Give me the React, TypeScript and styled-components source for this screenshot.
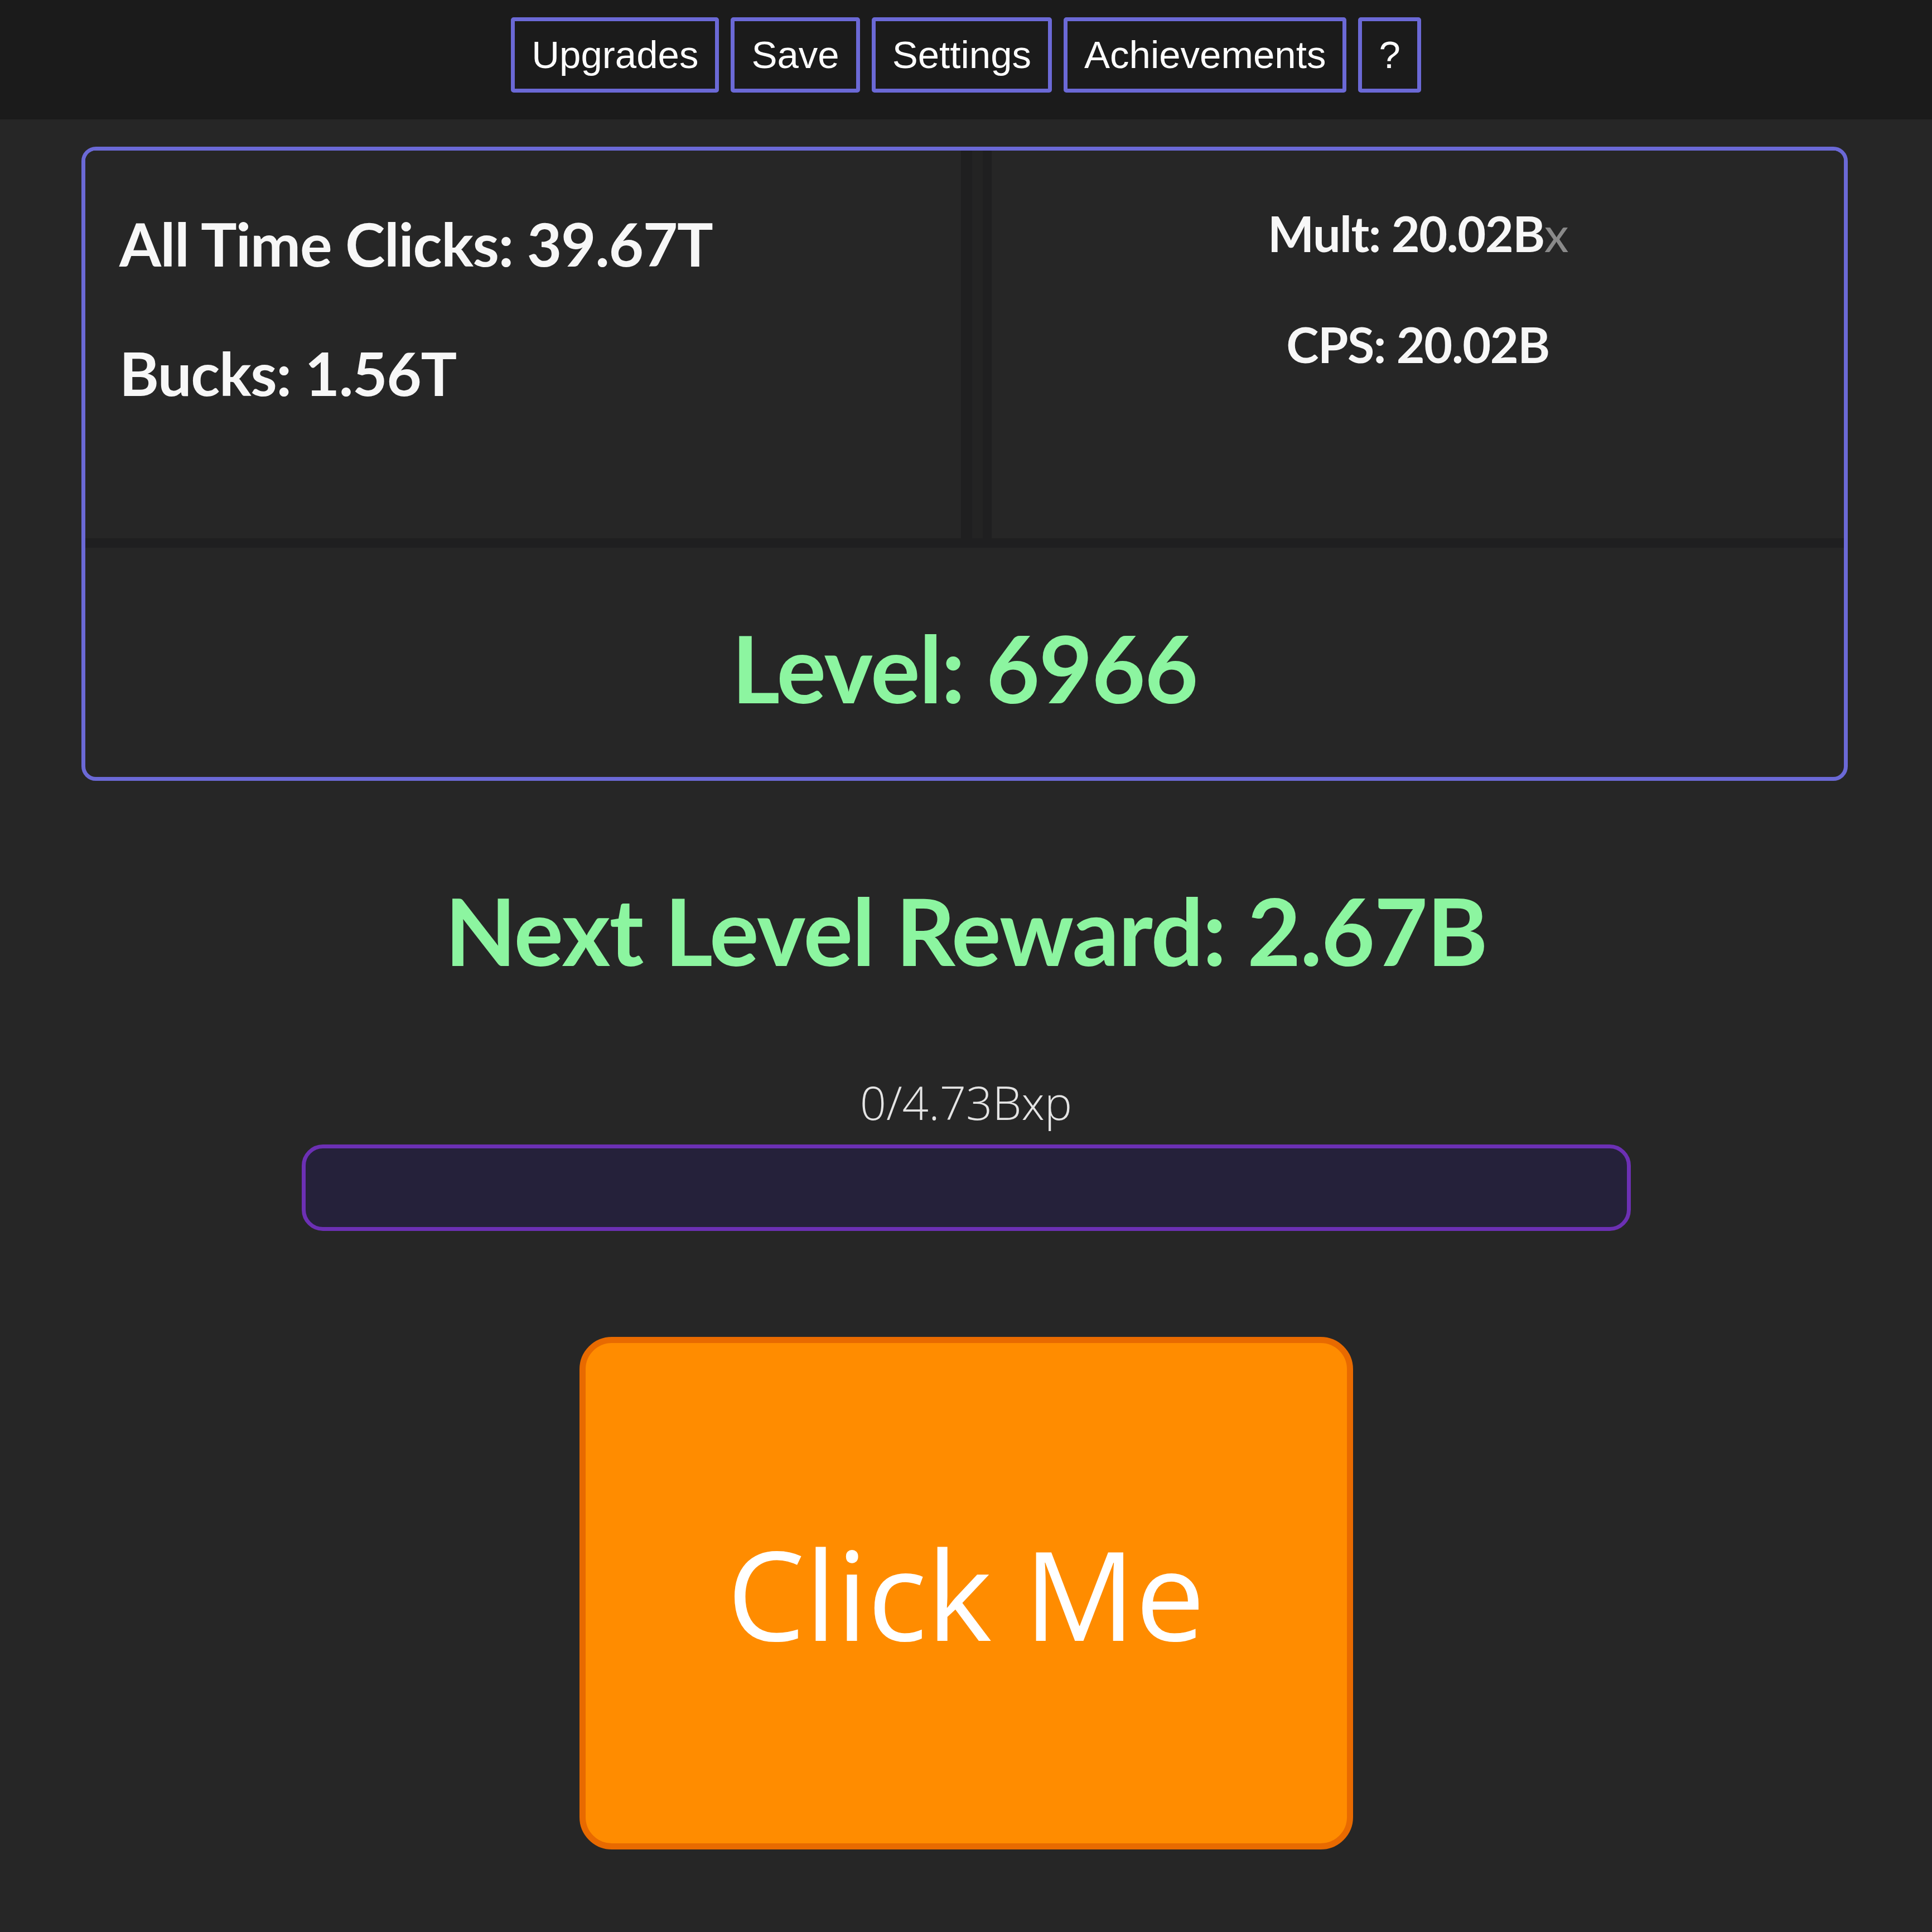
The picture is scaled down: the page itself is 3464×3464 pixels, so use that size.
import React from "react";
import styled, { createGlobalStyle } from "styled-components";

const GlobalStyle = createGlobalStyle`
  html, body {
    margin: 0;
    padding: 0;
    background: #262626;
  }
  body {
    font-family: "Lato", "Liberation Sans", sans-serif;
    color: #f7f7f7;
  }
`;

const Header = styled.header`
  height: 214px;
  box-sizing: border-box;
  padding-top: 31px;
  background: #1b1b1b;
  display: flex;
  justify-content: center;
  align-items: flex-start;
  gap: 21px;
`;

const NavButton = styled.button`
  height: 135px;
  box-sizing: border-box;
  padding: 0 30px;
  background: #1b1b1b;
  border: 7px solid #6b69d6;
  border-radius: 5px;
  color: #ffffff;
  font-family: "Liberation Sans", Arial, sans-serif;
  font-size: 69px;
  line-height: 1;
  cursor: pointer;
`;

const Card = styled.section`
  margin: 49px 151px 0 146px;
  border: 7px solid #6b69d6;
  border-radius: 26px;
  background: #262626;
  overflow: hidden;
`;

const TopRow = styled.div`
  display: grid;
  grid-template-columns: 1.03fr 1fr;
  column-gap: 19px;
  height: 712px;
  box-sizing: border-box;
  background: #232323;
  border-bottom: 17px solid #1f1f20;
`;

const StatCell = styled.div<{ $side: "left" | "right" }>`
  background: #262626;
  box-sizing: border-box;
  ${(p) =>
    p.$side === "left"
      ? `
    border-right: 20px solid #1f1f20;
    padding: 102px 0 0 61px;
    text-align: left;
  `
      : `
    border-left: 16px solid #1f1f20;
    padding: 96px 0 0 0;
    text-align: center;
  `}
`;

const BigStat = styled.p`
  margin: 0 0 102px 0;
  font-size: 108px;
  line-height: 1.2;
  font-weight: 700;
  letter-spacing: -1.4px;
`;

const SmallStat = styled.p`
  margin: 0 0 93px 0;
  font-size: 88px;
  line-height: 1.2;
  font-weight: 700;
  letter-spacing: -1.5px;
`;

const Suffix = styled.span`
  color: #8a8a8a;
  font-weight: 400;
`;

const LevelRow = styled.div`
  height: 411px;
  box-sizing: border-box;
  padding-top: 115px;
  text-align: center;
`;

const GreenTitle = styled.h2<{ $gap?: number }>`
  margin: ${(p) => p.$gap ?? 0}px 0 0 0;
  text-align: center;
  font-size: 166px;
  line-height: 1.2;
  font-weight: 700;
  letter-spacing: -1.5px;
  color: #8cf5a0;
`;

const XpLabel = styled.p`
  margin: 159px 0 0 0;
  text-align: center;
  font-family: "Open Sans", sans-serif;
  font-weight: 300;
  font-size: 83px;
  line-height: 1.2;
  color: #e4e4e4;
`;

const XpTrack = styled.div`
  width: 2383px;
  height: 155px;
  box-sizing: border-box;
  margin: 26px auto 0 auto;
  border: 7px solid #6c30b4;
  border-radius: 38px;
  background: #25213a;
  overflow: hidden;
`;

const XpFill = styled.div`
  height: 100%;
  background: #6c30b4;
`;

const ClickArea = styled.div`
  display: flex;
  justify-content: center;
  padding: 190px 0 150px 0;
`;

const ClickButton = styled.button`
  width: 1387px;
  height: 919px;
  box-sizing: border-box;
  background: #ff8c00;
  border: 11px solid #e86a00;
  border-radius: 58px;
  color: #ffffff;
  font-family: "Open Sans", sans-serif;
  font-size: 222px;
  font-weight: 400;
  cursor: pointer;
`;

const navItems = ["Upgrades", "Save", "Settings", "Achievements", "?"];

export default function App() {
  const xp = 0;
  const xpNeeded = 4.73e9;
  const pct = (xp / xpNeeded) * 100;

  return (
    <>
      <GlobalStyle />
      <Header>
        {navItems.map((n) => (
          <NavButton key={n}>{n}</NavButton>
        ))}
      </Header>

      <Card>
        <TopRow>
          <StatCell $side="left">
            <BigStat>All Time Clicks: 39.67T</BigStat>
            <BigStat>Bucks: 1.56T</BigStat>
          </StatCell>
          <StatCell $side="right">
            <SmallStat>
              Mult: 20.02B<Suffix>x</Suffix>
            </SmallStat>
            <SmallStat>CPS: 20.02B</SmallStat>
          </StatCell>
        </TopRow>
        <LevelRow>
          <GreenTitle>Level: 6966</GreenTitle>
        </LevelRow>
      </Card>

      <GreenTitle $gap={168}>Next Level Reward: 2.67B</GreenTitle>

      <XpLabel>0/4.73Bxp</XpLabel>
      <XpTrack>
        <XpFill style={{ width: `${pct}%` }} />
      </XpTrack>

      <ClickArea>
        <ClickButton>Click Me</ClickButton>
      </ClickArea>
    </>
  );
}
